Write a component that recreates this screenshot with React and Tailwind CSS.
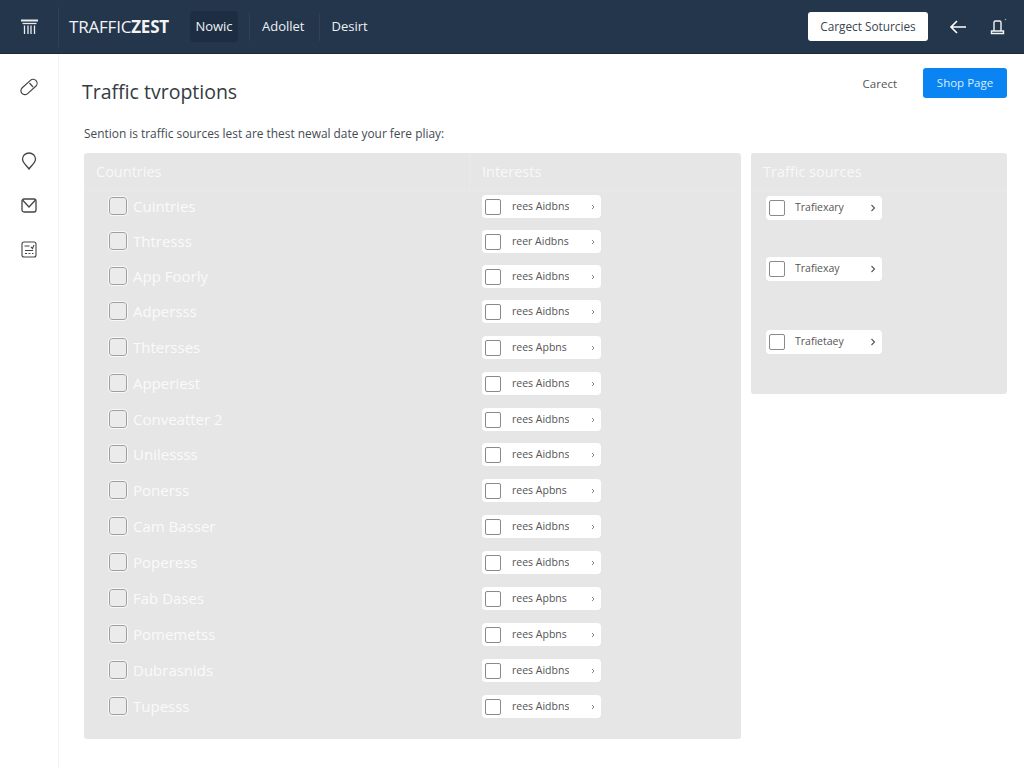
import React from "react";

const countries = [
  ["Cuintries", "mt-0"],
  ["Thtresss", "mt-[5px]"],
  ["App Foorly", "mt-[5px]"],
  ["Adpersss", "mt-[5px]"],
  ["Thtersses", "mt-[6px]"],
  ["Apperiest", "mt-[6px]"],
  ["Conveatter 2", "mt-[6px]"],
  ["Unilessss", "mt-[5px]"],
  ["Ponerss", "mt-[6px]"],
  ["Cam Basser", "mt-[6px]"],
  ["Poperess", "mt-[6px]"],
  ["Fab Dases", "mt-[6px]"],
  ["Pomemetss", "mt-[6px]"],
  ["Dubrasnids", "mt-[6px]"],
  ["Tupesss", "mt-[6px]"],
];

const addons = [
  "rees Aidbns", "reer Aidbns", "rees Aidbns", "rees Aidbns", "rees Apbns",
  "rees Aidbns", "rees Aidbns", "rees Aidbns", "rees Apbns", "rees Aidbns",
  "rees Aidbns", "rees Apbns", "rees Apbns", "rees Aidbns", "rees Aidbns",
];

const Chevron = ({ size = 6 }) => (
  <svg width={size} height={size + 2} viewBox="0 0 6 8" fill="none" stroke="#555" strokeWidth="1.1">
    <path d="M1.5 1l3 3-3 3" />
  </svg>
);

const Pill = ({ label, chevron, className }) => (
  <div className={`flex items-center bg-white rounded-sm ${className}`}>
    <span className="ml-[3px] w-[16px] h-[16px] border border-[#8a8a8a] rounded-[2px] bg-white shrink-0" />
    <span className="text-[#555] truncate">{label}</span>
    <span className="ml-auto">{chevron}</span>
  </div>
);

const App = () => {
  return (
    <div className="w-[1024px] h-[768px] overflow-hidden flex flex-col bg-white font-['Open_Sans','Liberation_Sans',sans-serif]">
      <header className="h-[54px] shrink-0 flex items-center bg-[#24364b] text-white border-b border-[#1a2838]">
        <div className="w-[59px] h-[40px] flex items-center justify-center border-r border-[#2f4158]">
          <svg width="19" height="16" viewBox="0 0 19 16" fill="none" stroke="#e8ecf0" strokeWidth="1.3">
            <path d="M1 1.5h17" strokeWidth="2" />
            <path d="M2.5 4.5h14" />
            <path d="M4.5 6.5V15M8 6.5V15M11 6.5V15M14.5 6.5V15" />
          </svg>
        </div>
        <div className="ml-[10px] w-[121px] text-[17px] tracking-[-0.2px] text-[#f2f4f6]">
          TRAFFIC<span className="font-bold">ZEST</span>
        </div>
        <nav className="flex items-center text-[13px] font-medium text-[#eef1f4]">
          <div className="w-[48px] h-[31px] flex items-center justify-center rounded-sm bg-[#1e2e42]">Nowic</div>
          <div className="ml-[11px] h-[28px] pl-[12px] pr-[14px] flex items-center border-x border-[#2f4158]">Adollet</div>
          <div className="ml-[12px]">Desirt</div>
        </nav>
        <button className="ml-auto w-[120px] h-[29px] rounded-[3px] bg-white text-[#3a4552] text-[11.8px]">
          Cargect Soturcies
        </button>
        <svg className="ml-[21px]" width="18" height="14" viewBox="0 0 18 14" fill="none" stroke="#fff" strokeWidth="1.6">
          <path d="M17 7H2M8 1L2 7l6 6" />
        </svg>
        <svg className="ml-[22px] mr-[17px]" width="18" height="18" viewBox="0 0 18 18" fill="none" stroke="#f2f4f6" strokeWidth="1.4">
          <path d="M5 13V4.500A1.500 1.500 0 0 1 6.500 3h4A1.500 1.500 0 0 1 12 4.500V13" />
          <path d="M2.500 13h12v2.500h-12z" />
          <circle cx="16.500" cy="1.500" r="0.700" fill="#aab4c0" stroke="none" />
        </svg>
      </header>

      <div className="flex flex-1 min-h-0">
        <aside className="w-[59px] shrink-0 flex flex-col items-center border-r border-[#f3f4f5] pt-[23px]">
          <svg width="20" height="20" viewBox="0 0 20 20" fill="none" stroke="#444" strokeWidth="1.2">
            <rect x="0.500" y="6" width="19" height="8" rx="4" transform="rotate(-42 10 10)" />
            <path d="M10.500 6l3.500 4" />
          </svg>
          <svg className="mt-[55px]" width="16" height="18" viewBox="0 0 16 18" fill="none" stroke="#444" strokeWidth="1.3">
            <path d="M8 17C5 13 1.500 10.500 1.500 7a6.500 6 0 0 1 13 0c0 3.500-3.500 6-6.500 10z" />
          </svg>
          <svg className="mt-[28px]" width="16" height="15" viewBox="0 0 16 15" fill="none" stroke="#444" strokeWidth="1.3">
            <rect x="1" y="1" width="14" height="13" rx="2" />
            <path d="M1.500 2L8 9l6.500-7" />
          </svg>
          <svg className="mt-[28px]" width="16" height="17" viewBox="0 0 16 17" fill="none" stroke="#444" strokeWidth="1.1">
            <rect x="1" y="1" width="14" height="15" rx="2" />
            <path d="M3.500 5h5M10 6l1.500 1.500L13 4M4 9.500h8M4 12.500h2M7.500 12.500h2M11 12.500h1.500" />
          </svg>
        </aside>

        <main className="flex-1 min-w-0 pl-[25px] pr-[17px] pt-[14px]">
          <div className="flex items-start h-[56px]">
            <h1 className="mt-[10px] -ml-[2px] text-[19.5px] leading-[28px] text-[#333a42]">Traffic tvroptions</h1>
            <span className="ml-auto mt-[7px] text-[11.5px] text-[#555]">Carect</span>
            <button className="ml-[26px] w-[84px] h-[30px] rounded-[3px] bg-[#0b84f3] text-[#d8ecff] text-[11.5px] font-medium">
              Shop Page
            </button>
          </div>
          <p className="h-[18px] text-[11.9px] leading-[18px] text-[#444b52] mb-[11px]">
            Sention is traffic sources lest are thest newal date your fere pliay:
          </p>
          <div className="flex gap-[10px] items-start">
            <section className="w-[657px] h-[586px] rounded-[3px] bg-[#e6e6e6] flex flex-col">
              <div className="h-[38px] shrink-0 flex items-center border-b border-[#e9e9e9] text-[14.5px] text-[#f8f8f8]">
                <div className="w-[386px] h-full flex items-center pl-[12px] border-r border-[#e9e9e9]">Countries</div>
                <div className="pl-[12px]">Interests</div>
              </div>
              <div className="flex">
                <div className="w-[398px]">
                  {countries.map(([label, gap]) => (
                    <div key={label} className={`${gap} h-[30px] flex items-center pl-[25px]`}>
                      <span className="w-[18px] h-[18px] rounded-[3px] border border-[#a0a0a0] bg-[#ebebeb] outline outline-[#f8f8f8] shrink-0" />
                      <span className="ml-[6px] text-[15px] text-[#fafafa]">{label}</span>
                    </div>
                  ))}
                </div>
                <div>
                  {addons.map((label, i) => (
                    <div key={i} className={`${countries[i][1]} h-[30px] pt-[1px] flex items-center`}>
                      <Pill
                        label={label}
                        chevron={<span className="block mr-[6px]"><Chevron size={4} /></span>}
                        className="w-[119px] h-[23px] text-[10.5px] [&>span:nth-child(2)]:ml-[11px]"
                      />
                    </div>
                  ))}
                </div>
              </div>
            </section>

            <section className="w-[256px] h-[241px] rounded-[3px] bg-[#e6e6e6] flex flex-col">
              <div className="h-[38px] shrink-0 flex items-center pl-[12px] border-b border-[#e9e9e9] text-[14.5px] text-[#f8f8f8]">
                Traffic sources
              </div>
              <div className="pl-[15px] pt-[5px] flex flex-col">
                <Pill label="Trafiexary" chevron={<span className="block mr-[6px]"><Chevron /></span>} className="w-[116px] h-[24px] text-[10.5px] [&>span:nth-child(2)]:ml-[10px]" />
                <Pill label="Trafiexay" chevron={<span className="block mr-[6px]"><Chevron /></span>} className="mt-[37px] w-[116px] h-[24px] text-[10.5px] [&>span:nth-child(2)]:ml-[10px]" />
                <Pill label="Trafietaey" chevron={<span className="block mr-[6px]"><Chevron /></span>} className="mt-[49px] w-[116px] h-[24px] text-[10.5px] [&>span:nth-child(2)]:ml-[10px]" />
              </div>
            </section>
          </div>
        </main>
      </div>
    </div>
  );
};

export default App;
